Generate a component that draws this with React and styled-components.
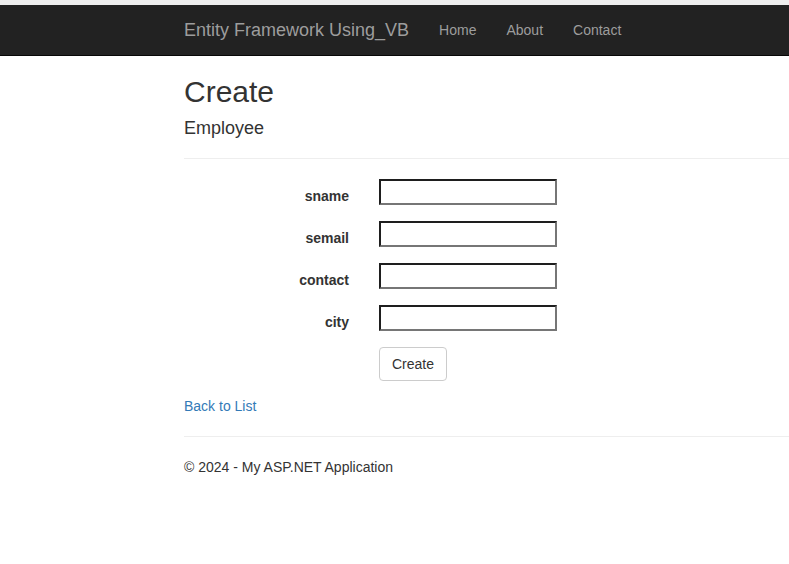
import React from 'react';
import styled, { createGlobalStyle } from 'styled-components';

const GlobalStyle = createGlobalStyle`
  html, body {
    margin: 0;
    padding: 0;
    background: #fff;
  }
  body {
    font-family: "Liberation Sans", Arial, Helvetica, sans-serif;
    font-size: 14px;
    line-height: 20px;
    color: #333;
    border-top: 5px solid #eeeeee;
  }
`;

// Top navigation bar (bootstrap inverse style)
const Navbar = styled.nav`
  height: 50px;
  background-color: #222;
  border-bottom: 1px solid #080808;
  display: flex;
  align-items: stretch;
  padding-left: 184px;
`;

const Brand = styled.a`
  font-size: 18px;
  line-height: 20px;
  padding: 15px 15px 15px 0;
  color: #9d9d9d;
  text-decoration: none;
`;

const NavList = styled.ul`
  display: flex;
  list-style: none;
  margin: 0;
  padding: 0;
`;

const NavLink = styled.a`
  display: block;
  padding: 15px;
  line-height: 20px;
  color: #9d9d9d;
  text-decoration: none;
`;

const Body = styled.div`
  padding-left: 184px;
`;

const PageTitle = styled.h2`
  font-size: 30px;
  font-weight: 500;
  line-height: 33px;
  margin: 19px 0 10px;
`;

const SubTitle = styled.h4`
  font-size: 18px;
  font-weight: 500;
  line-height: 20px;
  margin: 9px 0 11px;
`;

const Rule = styled.hr`
  border: 0;
  border-top: 1px solid #eee;
  margin: 20px 0;
  height: 0;
`;

const FormGroup = styled.div`
  display: grid;
  grid-template-columns: 165px 178px;
  column-gap: 30px;
  align-items: start;
  margin-bottom: 15px;
`;

const Label = styled.label`
  text-align: right;
  font-weight: 700;
  padding-top: 7px;
  line-height: 20px;
`;

const TextInput = styled.input`
  box-sizing: border-box;
  width: 178px;
  height: 26px;
  margin: 0;
  padding: 1px 2px;
  border-style: solid;
  border-width: 2px;
  border-color: #1e1e1e #767676 #767676 #1e1e1e;
  background: #fff;
  font: 13px "Liberation Sans", Arial, sans-serif;
`;

const Button = styled.button`
  grid-column: 2;
  justify-self: start;
  font: 14px/20px "Liberation Sans", Arial, sans-serif;
  color: #333;
  background: #fff;
  border: 1px solid #ccc;
  border-radius: 4px;
  padding: 6px 12px;
`;

const Link = styled.a`
  color: #337ab7;
  text-decoration: none;
`;

const Footer = styled.footer`
  p {
    margin: 0 0 10px;
  }
`;

const fields = ['sname', 'semail', 'contact', 'city'];

const App = () => (
  <>
    <GlobalStyle />
    <Navbar>
      <Brand href="#">Entity Framework Using_VB</Brand>
      <NavList>
        <li><NavLink href="#">Home</NavLink></li>
        <li><NavLink href="#">About</NavLink></li>
        <li><NavLink href="#">Contact</NavLink></li>
      </NavList>
    </Navbar>
    <Body>
      <PageTitle>Create</PageTitle>
      <form onSubmit={(e) => e.preventDefault()}>
        <SubTitle>Employee</SubTitle>
        <Rule />
        {fields.map((name) => (
          <FormGroup key={name}>
            <Label htmlFor={name}>{name}</Label>
            <TextInput id={name} type="text" />
          </FormGroup>
        ))}
        <FormGroup>
          <Button type="submit">Create</Button>
        </FormGroup>
      </form>
      <div>
        <Link href="#">Back to List</Link>
      </div>
      <Rule />
      <Footer>
        <p>© 2024 - My ASP.NET Application</p>
      </Footer>
    </Body>
  </>
);

export default App;
